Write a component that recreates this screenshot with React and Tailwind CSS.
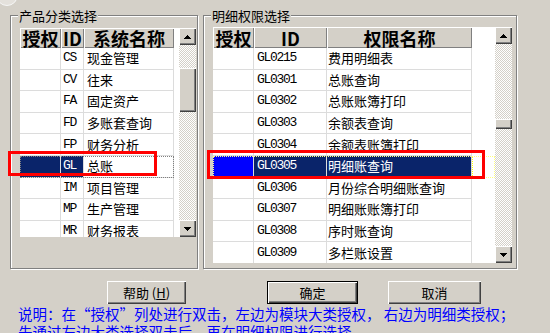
import React from 'react'

const LEFT = [
  ['CS', '现金管理'],
  ['CV', '往来'],
  ['FA', '固定资产'],
  ['FD', '多账套查询'],
  ['FP', '财务分析'],
  ['GL', '总账'],
  ['IM', '项目管理'],
  ['MP', '生产管理'],
  ['MR', '财务报表'],
]

const RIGHT = [
  ['GL0215', '费用明细表'],
  ['GL0301', '总账查询'],
  ['GL0302', '总账账簿打印'],
  ['GL0303', '余额表查询'],
  ['GL0304', '余额表账簿打印'],
  ['GL0305', '明细账查询'],
  ['GL0306', '月份综合明细账查询'],
  ['GL0307', '明细账账簿打印'],
  ['GL0308', '序时账查询'],
  ['GL0309', '多栏账设置'],
]

const raised = 'bg-[#d4d0c8] shadow-[inset_1px_1px_0_#fff,inset_-1px_-1px_0_#404040,inset_-2px_-2px_0_#808080]'
const head = 'bg-[#d4d0c8] shadow-[inset_1px_1px_0_#fff,inset_-1px_-1px_0_#808080] flex items-center justify-center font-bold text-[18px] leading-[20px] shrink-0'
const cell = 'border-r border-b border-[#dcdcdc] flex items-center shrink-0 leading-[20px]'
const track = 'bg-[image:repeating-conic-gradient(#d4d0c8_0%_25%,#ffffff_0%_50%)] bg-[length:2px_2px]'
const mono = "font-['Liberation_Mono',monospace] text-[13px] tracking-[-1.3px]"

function Arrow({ down }) {
  return (
    <div className={`${raised} w-[17px] h-[17px] shrink-0 flex items-center justify-center`}>
      <svg width="7" height="4" viewBox="0 0 7 4" shapeRendering="crispEdges">
        {down ? <path d="M0 0h7L3.5 4z" fill="#000" /> : <path d="M3.5 0L7 4H0z" fill="#000" />}
      </svg>
    </div>
  )
}

function ScrollBar({ before, thumb }) {
  return (
    <div className="w-[17px] flex flex-col shrink-0">
      <Arrow />
      <div className={`${track} ${before} shrink-0`} />
      <div className={`${raised} ${thumb} shrink-0`} />
      <div className={`${track} flex-1`} />
      <Arrow down />
    </div>
  )
}

function Group({ title, className, children }) {
  return (
    <div className={`h-[254px] border border-[#808080] shadow-[1px_1px_0_#fff,inset_1px_1px_0_#fff] shrink-0 ${className}`}>
      <div className="-mt-[8px] ml-[7px] w-fit px-[1px] bg-[#d4d0c8] text-[13px] leading-[15px] whitespace-nowrap">{title}</div>
      {children}
    </div>
  )
}

function LeftGrid() {
  return (
    <div className="mt-[5px] ml-[9px] h-[209px] w-[176px] flex">
      <div className="w-[159px] bg-white flex flex-col overflow-hidden">
        <div className="flex h-[20px] shrink-0">
          <div className={`${head} w-[41px]`}>授权</div>
          <div className={`${head} w-[23px]`}>ID</div>
          <div className={`${head} w-[90px]`}>系统名称</div>
        </div>
        {LEFT.map(([id, name]) => {
          const sel = id === 'GL'
          return (
            <div key={id} className="flex h-[21.6px] shrink-0">
              <div className={`flex ${sel ? 'outline outline-1 outline-dotted outline-[#808080] -outline-offset-1' : ''}`}>
                <div className={`${cell} w-[41px] ${sel ? 'bg-[#0a246a]' : ''}`} />
                <div className={`${cell} w-[23px] pl-[2px] ${mono} ${sel ? 'bg-[#0a246a] text-white' : ''}`}>{id}</div>
                <div className={`${cell} w-[90px] pl-[3px] text-[13px]`}>{name}</div>
              </div>
            </div>
          )
        })}
      </div>
      <ScrollBar before="h-[23px]" thumb="h-[44px]" />
    </div>
  )
}

function RightGrid() {
  return (
    <div className="mt-[4px] ml-[9px] h-[236px] w-[299px] flex">
      <div className="w-[282px] bg-white flex flex-col overflow-hidden">
        <div className="flex h-[21px] shrink-0">
          <div className={`${head} w-[41px]`}>授权</div>
          <div className={`${head} w-[73px]`}>ID</div>
          <div className={`${head} w-[145px]`}>权限名称</div>
        </div>
        {RIGHT.map(([id, name]) => {
          const sel = id === 'GL0305'
          return (
            <div key={id} className={`flex h-[21.6px] shrink-0 ${sel ? 'outline outline-1 outline-dotted outline-[#ffff80] -outline-offset-1' : ''}`}>
              <div className={`${cell} w-[41px] ${sel ? 'bg-[#0000ff]' : ''}`} />
              <div className={`${cell} w-[73px] pl-[3px] ${mono} ${sel ? 'bg-[#0a246a] text-white' : ''}`}>{id}</div>
              <div className={`${cell} w-[145px] pl-[1px] text-[13px] whitespace-nowrap ${sel ? 'bg-[#0a246a] text-white' : ''}`}>{name}</div>
              {sel && <div className="w-[23px] border border-dotted border-[#ffff00]" />}
            </div>
          )
        })}
      </div>
      <ScrollBar before="h-[75px]" thumb="h-[10px]" />
    </div>
  )
}

export default function App() {
  return (
    <div className="relative w-[550px] h-[333px] overflow-hidden bg-[#d4d0c8] text-black font-['Noto_Sans_CJK_SC',sans-serif]">
      <div className="absolute -left-[4px] -top-[16px] w-[22px] h-[22px] rounded-full bg-[#e4e1dc] border border-[#f6f6f6]" />

      <div className="pt-[15px] flex">
        <Group title="产品分类选择" className="ml-[10px] w-[188px]">
          <LeftGrid />
        </Group>
        <Group title="明细权限选择" className="ml-[5px] w-[314px]">
          <RightGrid />
        </Group>
      </div>

      <div className="mt-[12px] flex h-[23px] text-[13px]">
        <button className={`${raised} ml-[107px] w-[79px] h-[23px] leading-none`}>
          帮助 (<span className="underline">H</span>)
        </button>
        <button className={`${raised} ml-[81px] w-[91px] h-[23px] border border-black leading-none`}>确定</button>
        <button className={`${raised} ml-[30px] w-[93px] h-[23px] leading-none`}>取消</button>
      </div>

      <div className="mt-[1px] pl-[18px] text-[#0000ff] text-[14.5px] leading-[18px] whitespace-nowrap">
        <div>说明：在“授权”列处进行双击，左边为模块大类授权， 右边为明细类授权；</div>
        <div>先通过左边大类选择双击后，再在明细权限进行选择</div>
      </div>

      <div className="absolute left-[8px] top-[151px] w-[149px] h-[25px] border-[3px] border-[#ff0000]" />
      <div className="absolute left-[207px] top-[150px] w-[278px] h-[29px] border-[3px] border-[#ff0000]" />
    </div>
  )
}
